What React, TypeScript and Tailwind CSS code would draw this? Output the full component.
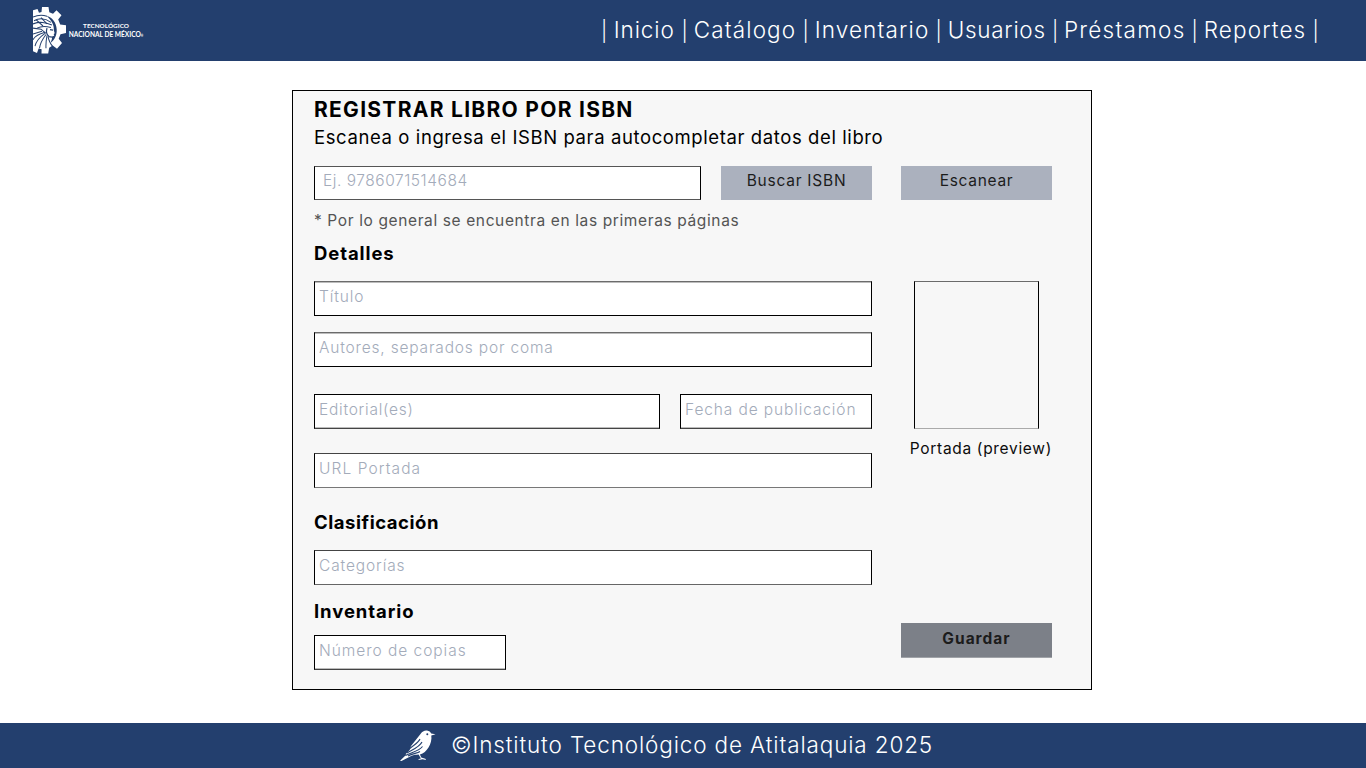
type FieldProps = { label: string; className: string };

function Field({ label, className }: FieldProps) {
  return (
    <input
      type="text"
      placeholder={label}
      className={`block shrink-0 border border-black bg-white pb-[5px] text-[15.5px] font-light text-black outline-none placeholder:text-[#a3abba] placeholder:opacity-100 ${className}`}
    />
  );
}

function TecnmLogo() {
  return (
    <svg className="h-[47px] w-[33px] shrink-0" viewBox="0 0 33 44.5" preserveAspectRatio="none">
      <path
        fill="#fff"
        d="M0 3 4.500 2l1.500 3.500 2.500-.7L9 0h6.500l.8 5 3.700 1.500L23.500 3l5 4.800-3.300 4 2 4.700 5.800.8v7.400l-5.500 1-1.800 4.300 3.300 4.200-5 5.300-4.300-3-3.500 2-1 5.500h-6.700L8.600 40l-3-.8L4 43.500 0 42Z"
      />
      <path
        fill="#233f6e"
        d="M13.500 8.500c5.500 1 9.800 6 10.200 12.500.4 5.500-2.200 10.300-6.200 13 1.200-2.300 1.700-4.300 1.500-6l2.200-.8-.5-1.700 1-.7-.9-2.800c.5-5-2.300-9.500-7.300-13.500Z"
      />
      <g fill="none" stroke="#233f6e" strokeWidth="1">
        <path d="M0 9.500c5-2 9-2.200 14-.7M1 13c6-3 11-2.500 17 1.500M0 16c7-2.500 12-1.500 19 1M4 20c5-2.500 9-2 14-.5" />
        <path d="M3 12l7 6M8 10l6 6M0 20l8 1 5 4" />
        <path d="M12 24C5 26 1 29 0 31M12 25C6 29 3 33 2 37M13 26c-4 5-6 9-6.500 13M14 27c-1 5-1.200 9-1 12M15 28c1 4 2.500 7 4.500 9M0 25.500l9-2.500" />
        <path d="M14 20c-1 3-.5 6 2 8l3 .5M17 21.500l3 .3" strokeWidth="1.200" />
      </g>
    </svg>
  );
}

function BirdLogo() {
  return (
    <svg className="h-[32px] w-[36px] shrink-0" viewBox="0 0 36 32">
      <path
        fill="#fff"
        d="M20.500 4C22 1.500 24.500.3 27 .6c2.200.3 3.600 1.500 4.200 2.900l4.300.7-4.200 1.200c.6 4-.6 8.500-2.800 12-2 3.300-5 6-8.600 7.200l1.400 3 4 1.100.8 1.400-3.500-.8-4.300.7.6-.9 2-.6-2.300-4c-2.500.3-5 .2-7 1.300L1.500 31 0 30.700l6.500-6.200-1-.2 4-4 1.500-4.300Z"
      />
      <circle cx="27.300" cy="4.200" r="1" fill="#233f6e" />
      <g fill="none" stroke="#233f6e" strokeWidth="1.100">
        <path d="M20 9c-2 4.500-6 5.500-12 11M22 12c-2 4.500-7 6.500-15 11M22.500 16.500c-3 4-8 5-17 9M20 21.500c-3 2-7 1.700-12 4.500" />
      </g>
    </svg>
  );
}

function Bar() {
  return <span className="flex w-[2px] justify-center pt-[2px] text-[20px]">|</span>;
}

const softTop = "border-t-[#6b6b6b] shadow-[inset_0_1px_0_#bcbcbc]";
const softBottom = "border-b-[#444444] shadow-[inset_0_-1px_0_#bcbcbc]";

export default function App() {
  return (
    <div className="flex h-screen flex-col overflow-hidden bg-white font-['Inter',sans-serif] text-black">
      <header className="flex h-[61px] shrink-0 items-center justify-between bg-[#233f6e] pl-[33px] pr-[49.5px] text-white">
        <div className="flex items-center gap-[3px]">
          <TecnmLogo />
          <div className="flex w-[74px] flex-col items-center whitespace-nowrap font-['Lato',sans-serif] text-[6.6px] font-bold leading-[8px]">
            <span className="text-[6.4px]">TECNOLÓGICO</span>
            <span>
              NACIONAL DE MÉXICO<span className="text-[3px]">®</span>
            </span>
          </div>
        </div>
        <nav className="flex items-center whitespace-nowrap pb-[2px] text-[22.5px] font-light leading-[30px]">
          <Bar />
          <a className="w-[78.5px] text-center tracking-[0.9px]">Inicio</a>
          <Bar />
          <a className="w-[119px] text-center tracking-[1.15px]">Catálogo</a>
          <Bar />
          <a className="w-[131px] text-center tracking-[1.15px]">Inventario</a>
          <Bar />
          <a className="w-[114.5px] text-center tracking-[0.7px]">Usuarios</a>
          <Bar />
          <a className="w-[137.5px] text-center tracking-[1.27px]">Préstamos</a>
          <Bar />
          <a className="w-[119px] text-center tracking-[1.15px]">Reportes</a>
          <Bar />
        </nav>
      </header>

      <main className="flex flex-1 justify-center pl-[18px] pt-[29px]">
        <form className="flex h-[600px] w-[800px] flex-col border border-black bg-[#f7f7f7] pl-[21px] pr-[39px] pt-[5px]">
          <h1 className="whitespace-nowrap text-[21px] font-bold leading-[28px] tracking-[1.28px]">
            REGISTRAR LIBRO POR ISBN
          </h1>
          <p className="whitespace-nowrap text-[18.5px] leading-[26px] tracking-[0.6px]">
            Escanea o ingresa el ISBN para autocompletar datos del libro
          </p>
          <div className="mt-[16px] flex">
            <Field label="Ej. 9786071514684" className="h-[34px] w-[387px] border-y-[#555555] pl-[8px] tracking-[0.54px]" />
            <button type="button" className="ml-[20px] h-[34px] w-[151px] bg-[#abb1be] pb-[4px] text-[15.5px] tracking-[0.76px] text-[#1c1c1c]">
              Buscar ISBN
            </button>
            <button type="button" className="ml-[29px] h-[34px] w-[151px] bg-[#abb1be] pb-[4px] text-[15.5px] tracking-[0.7px] text-[#1c1c1c]">
              Escanear
            </button>
          </div>
          <p className="mt-[10px] whitespace-nowrap text-[15.5px] leading-[22px] tracking-[0.62px] text-[#545454]">
            * Por lo general se encuentra en las primeras páginas
          </p>
          <div className="flex justify-between">
            <div className="flex w-[558px] flex-col">
              <h2 className="mt-[7px] text-[18.5px] font-bold leading-[28px] tracking-[0.9px]">Detalles</h2>
              <Field label="Título" className={`mt-[14px] h-[35px] w-full pl-[4px] tracking-[0.9px] ${softTop}`} />
              <Field label="Autores, separados por coma" className={`mt-[16px] h-[35px] w-full pl-[4px] tracking-[0.82px] ${softTop}`} />
              <div className="mt-[27px] flex justify-between">
                <Field label="Editorial(es)" className={`h-[35px] w-[346px] pl-[4px] tracking-[0.75px] ${softBottom}`} />
                <Field label="Fecha de publicación" className={`h-[35px] w-[192px] pl-[4px] tracking-[0.88px] ${softBottom}`} />
              </div>
              <Field label="URL Portada" className="mt-[24px] h-[35px] w-full border-b-[#777777] border-t-[#444444] pl-[4px] tracking-[1.1px]" />
              <h2 className="mt-[20px] text-[18.5px] font-bold leading-[28px] tracking-[0.55px]">Clasificación</h2>
              <Field label="Categorías" className="mt-[14px] h-[35px] w-full border-b-[#666666] border-t-[#444444] pl-[4px] tracking-[0.88px]" />
              <h2 className="mt-[12px] text-[18.5px] font-bold leading-[28px] tracking-[0.92px]">Inventario</h2>
              <Field label="Número de copias" className={`mt-[10px] h-[35px] w-[192px] pl-[4px] tracking-[0.96px] ${softBottom}`} />
            </div>
            <div className="flex w-[151px] flex-col items-center pt-[49px]">
              <div className="h-[148px] w-[125px] border border-black border-b-[#aaaaaa] border-t-[#6b6b6b]" />
              <p className="mt-[9px] self-end whitespace-nowrap text-[15.5px] leading-[22px] tracking-[0.68px] text-[#0c0c0c]">
                Portada (preview)
              </p>
              <button type="submit" className="mt-[163px] h-[35px] w-[151px] border-b border-[#a0a3a8] bg-[#7c8088] pb-[2px] text-[15.5px] font-bold tracking-[1px] text-[#1c1c1c]">
                Guardar
              </button>
            </div>
          </div>
        </form>
      </main>

      <footer className="flex h-[45px] shrink-0 items-center bg-[#233f6e] pl-[400px] text-white">
        <BirdLogo />
        <span className="ml-[15px] whitespace-nowrap pb-[1px] text-[22.5px] font-light leading-[30px] tracking-[0.86px]">
          ©Instituto Tecnológico de Atitalaquia 2025
        </span>
      </footer>
    </div>
  );
}
